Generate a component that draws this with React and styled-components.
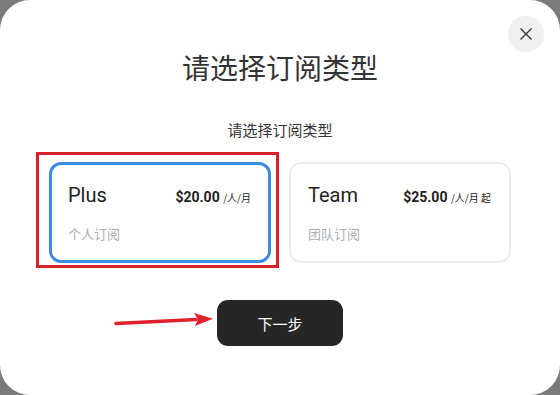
import React, { useState } from "react";
import styled, { createGlobalStyle } from "styled-components";

const plans = [
  { id: "plus", name: "Plus", price: "$20.00", unit: "/人/月", desc: "个人订阅" },
  { id: "team", name: "Team", price: "$25.00", unit: "/人/月 起", desc: "团队订阅" },
];

export default function App() {
  const [selected, setSelected] = useState("plus");

  return (
    <>
      <GlobalStyle />
      <Backdrop>
        <Modal>
          <CloseButton aria-label="关闭">
            <svg width="14" height="14" viewBox="0 0 14 14">
              <path d="M1.5 1.5 L12.5 12.5 M12.5 1.5 L1.5 12.5" stroke="#333" strokeWidth="1.3" fill="none" />
            </svg>
          </CloseButton>
          <Title>请选择订阅类型</Title>
          <Subtitle>请选择订阅类型</Subtitle>
          <CardRow>
            {plans.map((p) => (
              <Card key={p.id} $active={selected === p.id} onClick={() => setSelected(p.id)}>
                {p.id === "plus" && <Highlight />}
                <CardTop>
                  <PlanName>{p.name}</PlanName>
                  <Price>
                    {p.price} <Unit>{p.unit}</Unit>
                  </Price>
                </CardTop>
                <PlanDesc>{p.desc}</PlanDesc>
              </Card>
            ))}
          </CardRow>
          <ButtonRow>
            <Arrow width="104" height="16" viewBox="0 0 104 16">
              <path d="M2 11.5 L82 7.5" stroke="#e0202a" strokeWidth="3.5" strokeLinecap="round" />
              <path d="M80 1 L99 6.8 L81 14 L84 7.5 Z" fill="#e0202a" />
            </Arrow>
            <NextButton>下一步</NextButton>
          </ButtonRow>
        </Modal>
      </Backdrop>
    </>
  );
}

const GlobalStyle = createGlobalStyle`
  body {
    margin: 0;
    background: #7b7b7b;
    font-family: Roboto, "Noto Sans CJK SC", sans-serif;
  }
`;

const Backdrop = styled.div`
  width: 560px;
  height: 395px;
  background: #7b7b7b;
`;

const Modal = styled.div`
  position: relative;
  width: 560px;
  height: 395px;
  background: #fff;
  border-radius: 30px;
  display: flex;
  flex-direction: column;
  align-items: center;
  box-sizing: border-box;
  padding-top: 47px;
`;

const CloseButton = styled.button`
  position: absolute;
  top: 16px;
  right: 16px;
  width: 36px;
  height: 36px;
  border: none;
  border-radius: 50%;
  background: #efefef;
  display: flex;
  align-items: center;
  justify-content: center;
  padding: 0;
`;

const Title = styled.h1`
  margin: 0;
  font-size: 28px;
  line-height: 40px;
  font-weight: 400;
  color: #333;
  font-family: "Noto Sans CJK SC", sans-serif;
`;

const Subtitle = styled.div`
  margin-top: 33px;
  font-size: 15px;
  line-height: 20px;
  color: #333;
  font-family: "Noto Sans CJK SC", sans-serif;
`;

const CardRow = styled.div`
  margin-top: 22px;
  display: flex;
  gap: 18px;
`;

const Card = styled.div`
  position: relative;
  width: 222px;
  height: 101px;
  box-sizing: border-box;
  border: ${(p) => (p.$active ? "3px solid #3d8bdf" : "2px solid #ececec")};
  border-radius: 12px;
  padding: ${(p) => (p.$active ? "18px 17px 0 16px" : "19px 18px 0 17px")};
  display: flex;
  flex-direction: column;
  cursor: pointer;
`;

const Highlight = styled.div`
  position: absolute;
  top: -13px;
  left: -16px;
  width: 243px;
  height: 116px;
  border: 3px solid #d9202a;
  box-sizing: border-box;
  pointer-events: none;
`;

const CardTop = styled.div`
  display: flex;
  align-items: baseline;
  justify-content: space-between;
`;

const PlanName = styled.div`
  font-size: 20px;
  color: #222;
`;

const Price = styled.div`
  font-size: 14px;
  font-weight: 700;
  color: #222;
`;

const Unit = styled.span`
  font-size: 10px;
  font-weight: 400;
  font-family: "Noto Sans CJK SC", sans-serif;
`;

const PlanDesc = styled.div`
  margin-top: 17px;
  font-size: 13px;
  color: #a9adb3;
  font-family: "Noto Sans CJK SC", sans-serif;
`;

const ButtonRow = styled.div`
  position: relative;
  margin-top: 37px;
  display: flex;
`;

const Arrow = styled.svg`
  position: absolute;
  left: -103px;
  top: 12px;
`;

const NextButton = styled.button`
  width: 126px;
  height: 46px;
  border: none;
  border-radius: 11px;
  background: #262626;
  color: #fff;
  font-size: 15px;
  font-family: "Noto Sans CJK SC", sans-serif;
`;
